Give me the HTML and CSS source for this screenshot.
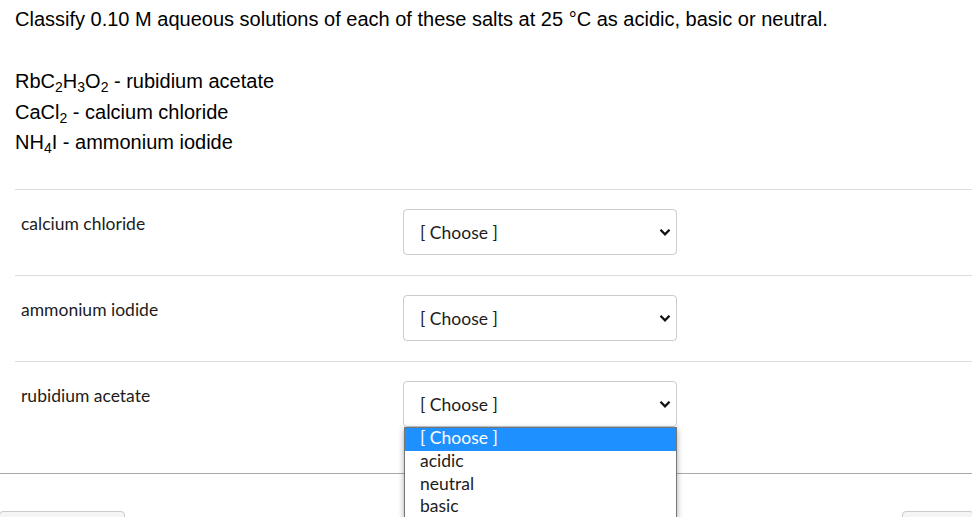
FILE: index.html
```html
<!DOCTYPE html>
<html>
<head>
<meta charset="utf-8">
<link rel="stylesheet" href="styles.css">
</head>
<body>
<div class="page">
  <div class="question">
    <p class="prompt">Classify 0.10 M aqueous solutions of each of these salts at 25 °C as acidic, basic or neutral.</p>
    <div class="salts">
      <div class="salt">RbC<sub>2</sub>H<sub>3</sub>O<sub>2</sub> - rubidium acetate</div>
      <div class="salt">CaCl<sub>2</sub> - calcium chloride</div>
      <div class="salt">NH<sub>4</sub>I - ammonium iodide</div>
    </div>
  </div>
  <div class="answers">
    <div class="row">
      <div class="label">calcium chloride</div>
      <div class="select">
        <span class="choose">[ Choose ]</span>
        <svg class="chev" width="12" height="8" viewBox="0 0 12 8"><path d="M1.5 1.8 L6 6.3 L10.5 1.8" fill="none" stroke="#111" stroke-width="2.3"/></svg>
      </div>
    </div>
    <div class="row">
      <div class="label">ammonium iodide</div>
      <div class="select">
        <span class="choose">[ Choose ]</span>
        <svg class="chev" width="12" height="8" viewBox="0 0 12 8"><path d="M1.5 1.8 L6 6.3 L10.5 1.8" fill="none" stroke="#111" stroke-width="2.3"/></svg>
      </div>
    </div>
    <div class="row last">
      <div class="label">rubidium acetate</div>
      <div class="select-wrap">
        <div class="select open">
          <span class="choose">[ Choose ]</span>
          <svg class="chev" width="12" height="8" viewBox="0 0 12 8"><path d="M1.5 1.8 L6 6.3 L10.5 1.8" fill="none" stroke="#111" stroke-width="2.3"/></svg>
        </div>
        <ul class="listbox">
          <li class="opt selected">[ Choose ]</li>
          <li class="opt">acidic</li>
          <li class="opt">neutral</li>
          <li class="opt">basic</li>
        </ul>
      </div>
    </div>
  </div>
  <div class="footer">
    <div class="btn btn-left"></div>
    <div class="btn btn-right"></div>
  </div>
</div>
</body>
</html>
```

FILE: styles.css
```css
html, body {
  margin: 0;
  padding: 0;
  background: #fff;
}
.page {
  width: 972px;
  height: 517px;
  overflow: hidden;
  position: relative;
}
.question {
  padding: 0 0 0 15px;
  font-family: "Liberation Sans", Arial, sans-serif;
  font-size: 20px;
  color: #000;
}
.prompt {
  margin: 0;
  padding-top: 8px;
  line-height: 23px;
}
.salts {
  margin-top: 35px;
}
.salt {
  height: 30.5px;
  line-height: 31px;
}
.salt sub {
  font-size: 14px;
  line-height: 0;
  vertical-align: -4px;
}
.answers {
  margin-left: 15px;
  margin-top: 31.5px;
  font-family: Lato, "Open Sans", sans-serif;
  font-size: 17.5px;
  color: #1c1c1c;
}
.row {
  display: flex;
  border-top: 1px solid #dcdcdc;
  height: 86px;
  box-sizing: border-box;
}
.row.last {
  height: 112px;
}
.label {
  width: 382px;
  padding-left: 6px;
  padding-top: 23px;
  line-height: 21px;
}
.select {
  margin-top: 19px;
  width: 274px;
  height: 46px;
  box-sizing: border-box;
  border: 1px solid #c7cdd1;
  border-radius: 4px;
  display: flex;
  align-items: center;
  justify-content: space-between;
  padding: 0 5px 0 16px;
  background: #fff;
}
.choose {
  font-size: 17.5px;
  color: #1c1c1c;
  padding-top: 1px;
}
.chev {
  display: block;
}
.select-wrap {
  position: relative;
}
.listbox {
  position: absolute;
  left: 1px;
  top: 65px;
  width: 273px;
  margin: 0;
  padding: 0;
  list-style: none;
  background: #fff;
  border: 1px solid #767676;
  border-bottom: none;
  box-shadow: 0 2px 6px rgba(0,0,0,0.35);
  z-index: 5;
  box-sizing: border-box;
}
.opt {
  height: 22.6px;
  line-height: 20px;
  padding-left: 15px;
  font-size: 17.5px;
  color: #1c1c1c;
}
.opt.selected {
  height: 23px;
  line-height: 20px;
  background: #1e90ff;
  color: #fff;
}
.footer {
  border-top: 1px solid #a9a9a9;
  height: 60px;
  display: flex;
  justify-content: space-between;
  align-items: flex-start;
}
.btn {
  margin-top: 37px;
  height: 30px;
  background: #f5f5f5;
  border: 1px solid #c7cdd1;
  border-radius: 4px;
  box-sizing: border-box;
}
.btn-left {
  width: 126px;
  margin-left: -1px;
}
.btn-right {
  width: 72px;
  margin-right: -2px;
}
```
